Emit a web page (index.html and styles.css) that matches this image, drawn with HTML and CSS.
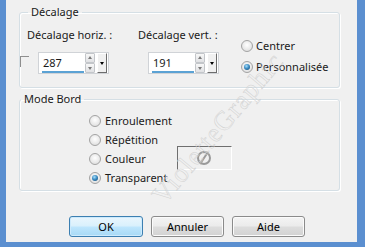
FILE: index.html
```html
<!DOCTYPE html>
<html lang="fr">
<head>
<meta charset="utf-8">
<title>Décalage</title>
<link rel="stylesheet" href="styles.css">
</head>
<body>
<div class="dialog">
  <fieldset class="group g1">
    <legend>Décalage</legend>
    <div class="col col-h">
      <div class="label">Décalage horiz. :</div>
      <div class="field-row">
        <span class="check"></span>
        <div class="spin-field">
          <span class="value">287</span>
          <span class="spinner"><span class="up"></span><span class="down"></span></span>
          <span class="drop"></span>
        </div>
      </div>
    </div>
    <div class="col col-v">
      <div class="label">Décalage vert. :</div>
      <div class="field-row">
        <div class="spin-field">
          <span class="value">191</span>
          <span class="spinner"><span class="up"></span><span class="down"></span></span>
          <span class="drop"></span>
        </div>
      </div>
    </div>
    <div class="col col-r">
      <div class="opt"><span class="radio"></span><span>Centrer</span></div>
      <div class="opt"><span class="radio on"></span><span>Personnalisée</span></div>
    </div>
  </fieldset>

  <fieldset class="group g2">
    <legend>Mode Bord</legend>
    <div class="mode-list">
      <div class="opt row"><span class="radio"></span><span class="txt">Enroulement</span></div>
      <div class="opt row"><span class="radio"></span><span class="txt">Répétition</span></div>
      <div class="opt row"><span class="radio"></span><span class="txt">Couleur</span>
        <span class="swatch"><svg width="16" height="16" viewBox="0 0 16 16"><circle cx="8" cy="8" r="6" fill="none" stroke="#9a9a9a" stroke-width="2"/><line x1="12" y1="2" x2="4" y2="14" stroke="#9a9a9a" stroke-width="2"/></svg></span>
      </div>
      <div class="opt row"><span class="radio on"></span><span class="txt">Transparent</span></div>
    </div>
  </fieldset>

  <div class="buttons">
    <button class="btn default">OK</button>
    <button class="btn">Annuler</button>
    <button class="btn">Aide</button>
  </div>

  <div class="watermark">VioletteGraphic</div>
</div>
</body>
</html>
```

FILE: styles.css
```css
html, body {
  margin: 0;
  padding: 0;
  background: #f0f0f0;
}

.dialog {
  position: relative;
  overflow: hidden;
  width: 365px;
  height: 247px;
  box-sizing: border-box;
  background: #f0f0f0;
  border-left: 6px solid #5b8fd0;
  border-right: 8px solid #5b8fd0;
  border-bottom: 5px solid #5b8fd0;
  padding: 4px 0 0 13px;
  font-family: "Noto Sans", "DejaVu Sans", sans-serif;
  font-size: 11px;
  line-height: 16px;
  color: #1a1a1a;
}

.group {
  margin: 0;
  width: 321px;
  box-sizing: border-box;
  border: 1px solid #d5dfe5;
  border-radius: 3px;
  box-shadow: inset 1px 1px 0 #fff, 1px 1px 0 #fff;
  min-width: 0;
}

.group legend {
  padding: 0 3px;
  margin-left: 1px;
  line-height: 16px;
}

.g1 {
  display: flex;
  padding: 7px 0 12px 7px;
}

.col-h { width: 111px; }
.col-v { width: 104px; }

.label { height: 16px; white-space: nowrap; }

.field-row {
  display: flex;
  align-items: flex-start;
  margin-top: 9px;
  margin-left: 10px;
}

.col-h .field-row { margin-left: -7px; }

.check {
  width: 8px;
  height: 10px;
  margin-top: 4px;
  border-top: 1px solid #8e8e8e;
  border-left: 1px solid #8e8e8e;
  margin-right: 9px;
}

.spin-field {
  position: relative;
  display: flex;
  align-items: center;
  width: 71px;
  height: 22px;
  box-sizing: border-box;
  background: #fff;
  border: 1px solid #d0d3d7;
  padding: 0 1px 0 3px;
}

.spin-field .value {
  flex: 1;
  height: 20px;
  line-height: 19px;
  box-sizing: border-box;
  border-bottom: 2px solid #5ba2d4;
  margin-right: 1px;
  padding-left: 1px;
  margin-top: -1px;
}

.spinner {
  display: flex;
  flex-direction: column;
  width: 10px;
  height: 20px;
}

.spinner span {
  flex: 1;
  position: relative;
  box-sizing: border-box;
  border: 1px solid #c3c6ca;
  background: linear-gradient(#f8f8f8, #e0e1e4);
  border-radius: 1px;
}

.spinner span::after {
  content: "";
  position: absolute;
  left: 2px;
  width: 0;
  height: 0;
  border-left: 2px solid transparent;
  border-right: 2px solid transparent;
}

.spinner .up::after { top: 2px; border-bottom: 3px solid #7a7a7a; }
.spinner .down::after { top: 3px; border-top: 3px solid #7a7a7a; }

.drop {
  position: relative;
  width: 10px;
  height: 20px;
  margin-left: 2px;
  box-sizing: border-box;
  background: #f0f0f0;
  border-top: 1px solid #fff;
  border-left: 1px solid #fff;
  border-right: 1px solid #6d6d6d;
  border-bottom: 1px solid #6d6d6d;
}

.drop::after {
  content: "";
  position: absolute;
  left: 2px;
  top: 8px;
  border-left: 2px solid transparent;
  border-right: 2px solid transparent;
  border-top: 3px solid #000;
}

.col-r {
  display: flex;
  flex-direction: column;
  gap: 5px;
  margin-top: 11px;
  margin-left: -1px;
}

.opt {
  display: flex;
  align-items: center;
  white-space: nowrap;
  height: 16px;
}

.radio {
  width: 12px;
  height: 12px;
  box-sizing: border-box;
  border-radius: 50%;
  border: 1px solid #a3a3a3;
  background: radial-gradient(circle at 50% 40%, #ffffff 0%, #ececec 50%, #d6d6d6 100%);
  margin-right: 3px;
  position: relative;
  flex: none;
}

.radio.on::after {
  content: "";
  position: absolute;
  left: 2px;
  top: 2px;
  width: 6px;
  height: 6px;
  border-radius: 50%;
  background: radial-gradient(circle at 40% 35%, #a9e0fb 0%, #3d8dc4 45%, #0e3f66 100%);
}

.g2 {
  margin-top: 3px;
  padding: 4px 0 3px 0;
}

.mode-list {
  display: flex;
  flex-direction: column;
  padding-left: 69px;
}

.row { height: 19px; }

.row .radio { margin-right: 4px; }

.row .txt { width: 72px; }

.swatch {
  display: flex;
  align-items: center;
  justify-content: center;
  width: 55px;
  height: 24px;
  box-sizing: border-box;
  margin-top: -2px;
  border-top: 1px solid #6f6f6f;
  border-left: 1px solid #6f6f6f;
  border-right: 1px solid #fff;
  border-bottom: 1px solid #fff;
  background: #f0f0f0;
  padding-right: 2px;
}

.buttons {
  display: flex;
  gap: 8px;
  margin-top: 25px;
  margin-left: 50px;
}

.btn {
  width: 73px;
  height: 21px;
  padding: 0;
  font: inherit;
  color: #000;
  border: 1px solid #8b8b8b;
  border-radius: 3px;
  background: linear-gradient(#f4f4f4 0%, #ebebeb 48%, #dddddd 52%, #d2d2d2 100%);
  box-shadow: inset 0 0 0 1px #fbfbfb;
}

.btn.default {
  width: 74px;
  border-color: #3c7fb1;
  background: linear-gradient(#eaf6fd 0%, #d9f0fc 48%, #bee6fd 52%, #a7d9f5 100%);
  box-shadow: inset 0 0 0 1px #cdeafc;
}

.watermark {
  position: absolute;
  left: 118px;
  top: 120px;
  transform: rotate(-50deg);
  transform-origin: center;
  font-family: "Liberation Serif", serif;
  font-size: 27px;
  letter-spacing: 1px;
  color: transparent;
  -webkit-text-stroke: 0.5px #d0d0d0;
  pointer-events: none;
  white-space: nowrap;
}
```
